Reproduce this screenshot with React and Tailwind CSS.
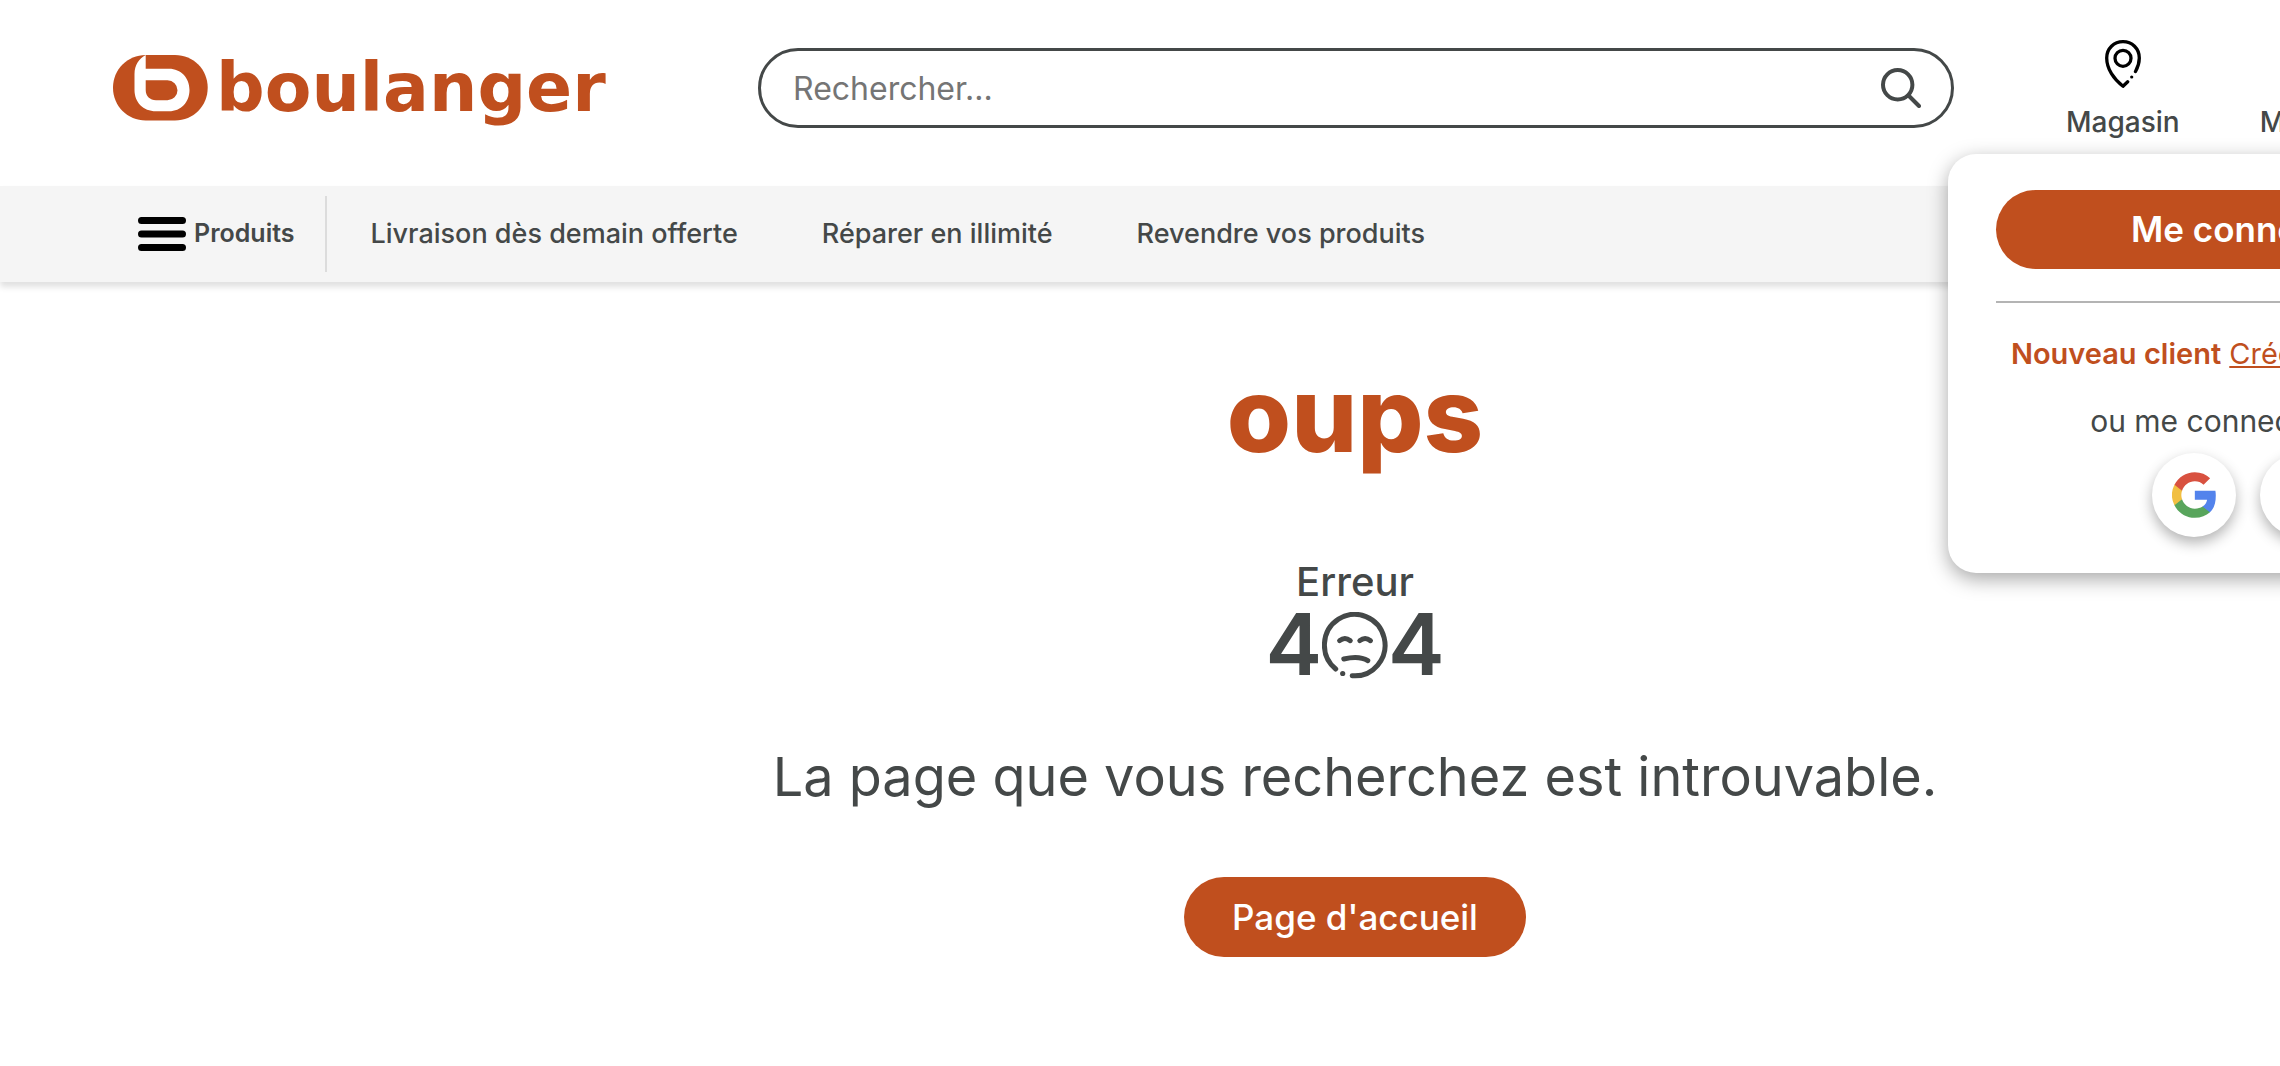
import { useState } from 'react'
import { FaApple } from 'react-icons/fa'

const navLinks = ['Livraison dès demain offerte', 'Réparer en illimité', 'Revendre vos produits']

function Logo() {
  return (
    <a href="#accueil" className="flex shrink-0 items-center gap-2 text-[#c04f1e]">
      <svg width="95" height="66" viewBox="0 0 95 66" aria-hidden="true">
        <path
          fill="currentColor"
          d="M32.7 0H62C80.5 0 94.7 14.5 94.7 32.7S80.5 65.4 62 65.4H32.7C14.5 65.4 0 51 0 32.7S14.5 0 32.7 0Z"
        />
        <path
          fill="#fff"
          d="M32.7 0V13.8H56C68 13.8 76.5 23 76.5 35S68 56.3 56 56.3H43C30 56.3 21.5 47 21.5 35V19C21.5 10 26 3.5 32.7 0Z"
        />
        <path fill="currentColor" d="M32.7 25.3H54.5A10 10 0 0 1 54.5 45.3H43C37 45.3 32.7 41 32.7 35Z" />
      </svg>
      <span className="font-['DejaVu_Sans',sans-serif] text-[68px] leading-[66px] font-bold">boulanger</span>
    </a>
  )
}

function PinIcon() {
  return (
    <svg width="36" height="48" viewBox="0 0 36 48" fill="none" stroke="#000" strokeWidth="3.3" strokeLinecap="round" strokeLinejoin="round" aria-hidden="true">
      <path d="M30.5 31.5C33 27 34.3 22 34.3 18C34.3 8.5 27 1.7 18 1.7S1.7 8.5 1.7 18C1.7 29 9 39.5 18 46.2L22.7 41.8" />
      <circle cx="18" cy="18.3" r="8" />
      <circle cx="26.7" cy="37" r="1.6" fill="#000" stroke="none" />
    </svg>
  )
}

function SearchIcon() {
  return (
    <svg width="40" height="40" viewBox="0 0 40 40" fill="none" stroke="currentColor" strokeWidth="4" strokeLinecap="round" aria-hidden="true">
      <circle cx="16.7" cy="16.7" r="14.7" />
      <path d="M28 28L38 38" />
    </svg>
  )
}

function SadFace() {
  return (
    <svg width="66" height="67" viewBox="0 0 66 67" fill="none" stroke="currentColor" strokeWidth="5" strokeLinecap="round" aria-hidden="true">
      <path d="M13.7 57A30.3 30.7 0 1 1 30.2 63.7" />
      <path d="M17.6 28.7Q22.9 24.3 28.3 28.7M37.8 28.7Q43.1 24.3 48.5 28.7" />
      <path d="M21.8 47C30 45 40 45 45.8 48.7" />
      <circle cx="20.7" cy="61.5" r="2.6" fill="currentColor" stroke="none" />
    </svg>
  )
}

function GoogleIcon() {
  return (
    <svg width="44" height="46" viewBox="1 1 21.2 22" aria-hidden="true">
      <path fill="#5383ec" d="M22.1 12.25c0-.78-.07-1.53-.2-2.25H12v4.26h5.92a5.06 5.06 0 0 1-2.2 3.32v2.77h3.57c2.08-1.92 2.81-4.74 2.81-8.1z" />
      <path fill="#58a55c" d="M12 23c2.97 0 5.46-.98 7.28-2.66l-3.57-2.77c-.98.66-2.23 1.06-3.71 1.06-2.86 0-5.29-1.93-6.16-4.53H2.18v2.84C3.99 20.53 7.7 23 12 23z" />
      <path fill="#f1bf42" d="M5.84 14.1A6.6 6.6 0 0 1 5.49 12c0-.73.13-1.43.35-2.09V7.07H2.18a11 11 0 0 0 0 9.86z" />
      <path fill="#d85140" d="M12 5.38c1.62 0 3.06.56 4.21 1.64l3.15-3.15C17.45 2.09 14.97 1 12 1 7.7 1 3.99 3.47 2.18 7.07l3.66 2.84C6.71 7.31 9.14 5.38 12 5.38z" />
    </svg>
  )
}

function LoginPopup() {
  const social = 'flex size-21 items-center justify-center rounded-full bg-white shadow-[0_6px_14px_rgba(0,0,0,0.3)]'

  return (
    <div className="absolute top-[154px] right-[162px] z-10 flex w-[600px] flex-col items-center rounded-[28px] bg-white px-12 py-9 shadow-[0_6px_20px_rgba(0,0,0,0.35)]">
      <button type="button" className="h-[79px] w-full rounded-full bg-[#c04f1e] text-[35px] font-semibold text-white">
        Me connecter
      </button>
      <hr className="mt-8 w-full border-t-2 border-[#b4b4b4]" />
      <p className="mt-8 text-[29px] leading-[38px] whitespace-nowrap text-[#c04f1e]">
        <span className="font-semibold">Nouveau client</span>{' '}
        <a href="#compte" className="underline decoration-2 underline-offset-2">Créer mon compte</a>
      </p>
      <p className="mt-7 text-[30px] leading-10">ou me connecter avec</p>
      <div className="mt-3 flex gap-6">
        <button type="button" aria-label="Google" className={social}>
          <GoogleIcon />
        </button>
        <button type="button" aria-label="Apple" className={social}>
          <FaApple size={40} />
        </button>
      </div>
    </div>
  )
}

export default function App() {
  const [query, setQuery] = useState('')

  return (
    <div className="min-h-screen overflow-x-hidden bg-white font-[Inter,sans-serif] text-[#444848]">
      <div className="relative min-w-[2710px]">
        <header>
          <div className="flex h-[186px] items-start pl-[113px]">
            <div className="mt-[55px] w-[495px] shrink-0">
              <Logo />
            </div>

            <form
              role="search"
              onSubmit={e => e.preventDefault()}
              className="mt-12 ml-[150px] flex h-20 flex-1 items-center rounded-full border-3 border-[#444848] pr-[30px] pl-8"
            >
              <input
                type="search"
                aria-label="Rechercher"
                placeholder="Rechercher..."
                value={query}
                onChange={e => setQuery(e.target.value)}
                className="h-full min-w-0 flex-1 text-[32px] outline-none placeholder:text-[#757575]"
              />
              <button type="submit" aria-label="Lancer la recherche">
                <SearchIcon />
              </button>
            </form>

            <nav className="mt-10 ml-28 flex w-[644px] shrink-0 gap-20 text-[28px] leading-9 font-medium">
              <a href="#magasin" className="flex flex-col items-center gap-4">
                <PinIcon />
                Magasin
              </a>
              <a href="#compte" className="flex flex-col justify-end">Mon compte</a>
            </nav>
          </div>

          {/* Category bar */}
          <nav className="flex h-24 items-center bg-[#f5f5f5] pl-[138px] shadow-[0_5px_6px_rgba(0,0,0,0.12)]">
            <button type="button" className="flex h-[76px] items-center gap-2 border-r-2 border-[#dcdcdc] pr-[30px] text-[25px] font-semibold">
              <svg width="48" height="34" viewBox="0 0 48 34" stroke="#000" strokeWidth="7" strokeLinecap="round" aria-hidden="true">
                <path d="M3.5 3.5H44.5M3.5 17H44.5M3.5 30.5H44.5" />
              </svg>
              Produits
            </button>
            <ul className="ml-11 flex gap-21 text-[27px] font-medium">
              {navLinks.map(label => (
                <li key={label}>
                  <a href="#offres">{label}</a>
                </li>
              ))}
            </ul>
          </nav>
        </header>

        <LoginPopup />

        <main className="flex flex-col items-center pt-18">
          <h1 className="text-[104px] leading-[120px] font-extrabold text-[#c04f1e]">oups</h1>
          <p className="mt-21 text-[40px] leading-12 font-medium">Erreur</p>
          <div className="mt-1 flex items-center text-[85px] leading-[70px] font-semibold">
            <span>4</span>
            <SadFace />
            <span>4</span>
          </div>
          <p className="mt-16 text-[54px] leading-[66px]">La page que vous recherchez est introuvable.</p>
          <a href="#accueil" className="mt-[67px] flex h-20 items-center rounded-full bg-[#c04f1e] px-12 text-[35px] font-medium text-white">
            Page d'accueil
          </a>
        </main>
      </div>
    </div>
  )
}
